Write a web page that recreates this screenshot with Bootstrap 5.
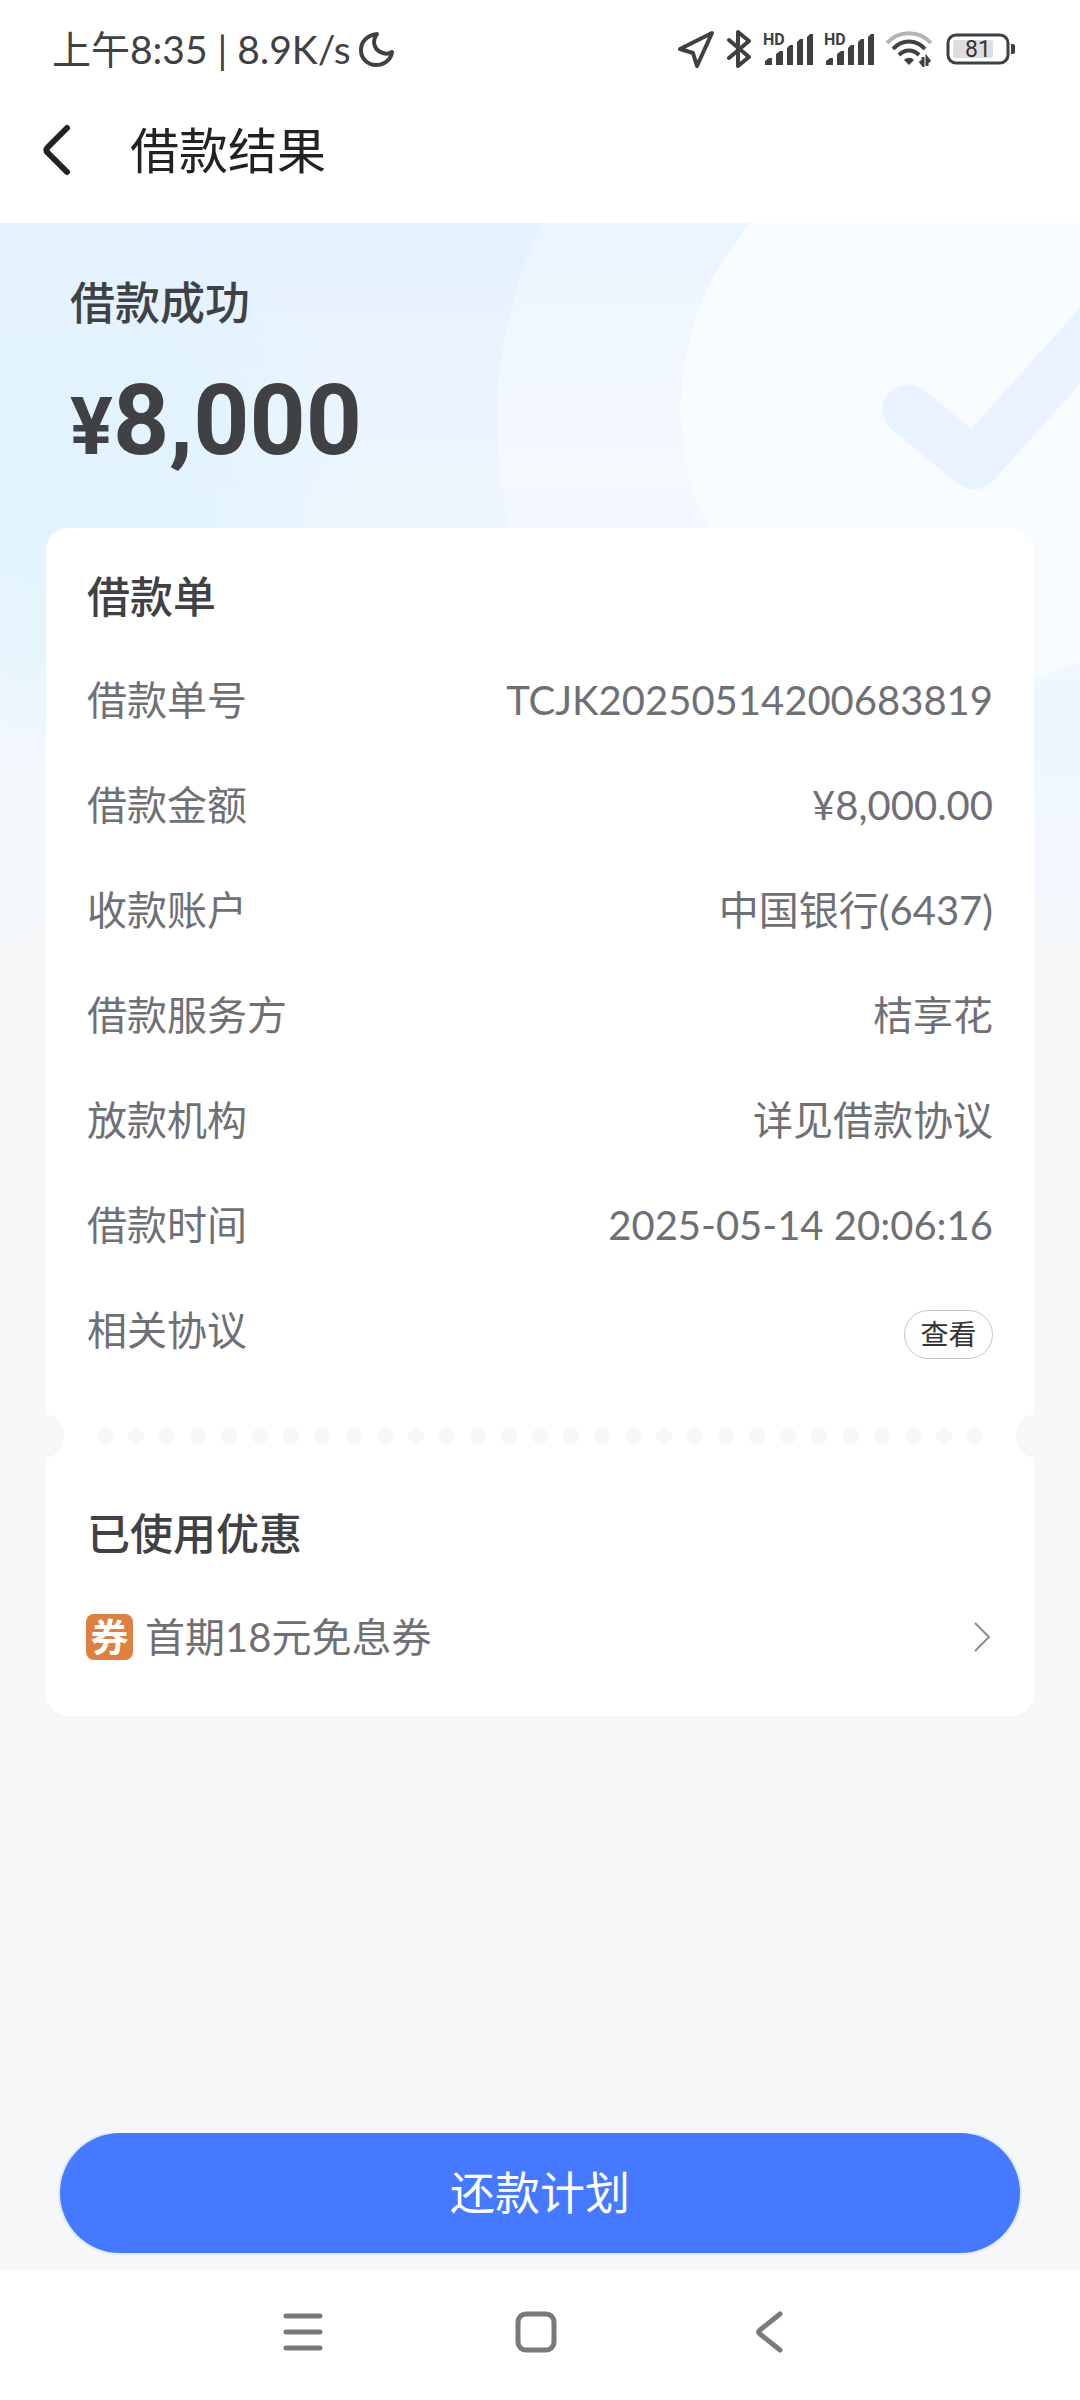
<!DOCTYPE html>
<html lang="zh-CN">
<head>
<meta charset="utf-8">
<meta name="viewport" content="width=device-width, initial-scale=1">
<title>借款结果</title>
<link href="https://cdn.jsdelivr.net/npm/bootstrap@5.3.0/dist/css/bootstrap.min.css" rel="stylesheet">
<style>
  :root { --ink: #404145; --muted: #6f7076; --page: #f5f7f9; --line: 60px; }
  body { font-family: Lato, "Noto Sans CJK SC", sans-serif; background: #fff; color: var(--ink); }
  svg { display: block; flex: none; }
  .status-bar { height: 98px; padding: 0 64px 0 52px; font-size: 39px; line-height: 48px; }
  .status-icons { gap: 11px; }
  .app-bar { height: 125px; padding: 0 40px 22px; gap: 58px; color: #222; }
  .app-title { font-size: 49px; line-height: 60px; font-weight: 400; }
  .result-page { background: linear-gradient(#e5f1fe 0, #eef6ff 280px, #f3f8fe 500px, var(--page) 720px); padding: 0 46px; }
  .backdrop { top: 0; right: 0; }
  .glow { top: 0; left: 0; width: 520px; height: 640px; background: radial-gradient(circle at 80px 270px, #dff3fdcc 0, #dff3fd99 160px, #dff3fd00 280px); }
  .result-head { padding: 50px 24px 47px; }
  .result-state { font-size: 45px; line-height: var(--line); font-weight: 500; }
  .amount { font-family: Roboto, sans-serif; font-weight: 700; font-size: 98px; line-height: 120px; padding-top: 28px; }
  .amount span { font-size: 80px; line-height: 80px; }
  .sheet { border-radius: 22px; padding: 39px 41px 26px; }
  .sheet-title { font-size: 43px; line-height: var(--line); font-weight: 500; }
  .fact { height: 105px; font-size: 40px; line-height: var(--line); color: var(--muted); }
  .facts { padding: 20px 0 31px; }
  .btn-view { --bs-btn-color: #333; --bs-btn-border-color: #c4c4c6; width: 89px; height: 49px; padding: 0; border-radius: 25px; font-size: 28px; line-height: 45px; margin-top: 10px; }
  .tear { height: 46px; margin: 0 -41px 45px; padding: 0 51px; }
  .tear::before, .tear::after { content: ""; position: absolute; top: 0; width: 46px; height: 46px; border-radius: 50%; background: var(--page); }
  .tear::before { left: -28px; }
  .tear::after { right: -28px; }
  .tear i { width: 16px; height: 16px; border-radius: 50%; background: #f5f7f9; }
  .coupon { margin-top: 20px; height: 106px; font-size: 40px; line-height: var(--line); color: var(--muted); gap: 12px; }
  .coupon-tag { width: 47px; height: 46px; border-radius: 8px; background: #dd8042; font-size: 38px; line-height: 44px; font-weight: 700; margin-left: -1px; }
  .action-bar { padding: 0 60px 17px; background: var(--page); }
  .btn-plan { --bs-btn-color: #fff; --bs-btn-bg: #4579ff; --bs-btn-hover-color: #fff; --bs-btn-hover-bg: #3a6cf0; --bs-btn-border-width: 0; height: 120px; border-radius: 60px; font-size: 45px; line-height: var(--line); box-shadow: 0 0 0 2px #dce9ff; }
  .system-nav { height: 130px; padding: 0 278px 6px 270px; }
  .system-nav .btn { padding: 12px; border: 0; }
</style>
</head>
<body class="min-vh-100 d-flex flex-column">
<header>
  <div class="status-bar d-flex align-items-center justify-content-between">
    <div class="d-flex align-items-center gap-2">
      <span>上午8:35 | 8.9K/s</span>
      <svg width="36" height="36" viewBox="0 0 36 36" fill="none" stroke="#404040" stroke-width="4" stroke-linejoin="round"><path d="M18 3C8 4 2 11 2 19c0 9 7 15 15 15 8 0 15-5 16-13-3 2-6 2-9 1-8-2-12-11-6-19z"/></svg>
    </div>
    <div class="status-icons d-flex align-items-center">
      <svg width="38" height="38" viewBox="0 0 38 38" fill="none" stroke="#404040" stroke-width="4" stroke-linejoin="round"><path d="M35 3 3 19l13 4 4 13z"/></svg>
      <svg width="26" height="38" viewBox="0 0 26 38" fill="none" stroke="#404040" stroke-width="4" stroke-linejoin="round" stroke-linecap="round"><path d="M3 10l20 17-11 9V2l11 9L3 28"/></svg>
      <svg width="50" height="38" viewBox="0 0 50 38" fill="#404040"><text x="0" y="15" font-size="16" font-weight="700" font-family="Roboto, sans-serif">HD</text><path d="M2 35v-4l4-3h3v7zM13 35V24l4-3h3v14zM24 35V18l3-3h3v20zM34 35V12l3-3h3v26zM44 35V7l3-3h3v31z"/></svg>
      <svg width="50" height="38" viewBox="0 0 50 38" fill="#404040"><text x="0" y="15" font-size="16" font-weight="700" font-family="Roboto, sans-serif">HD</text><path d="M2 35v-4l4-3h3v7zM13 35V24l4-3h3v14zM24 35V18l3-3h3v20zM34 35V12l3-3h3v26zM44 35V7l3-3h3v31z"/></svg>
      <svg width="50" height="36" viewBox="0 0 50 36" fill="none" stroke="#404040" stroke-width="4"><path d="M2 12C14-1 34-1 46 12" stroke="#b4b4b4"/><path d="M8 18c9-10 23-10 32 0M14 24c6-6 14-6 20 0"/><path d="M24 34l-5-5c3-3 7-3 10 0z" fill="#404040" stroke="none"/><path d="M38 26v8l-3-4M42 35v-8l3 4" stroke-width="3"/></svg>
      <svg width="70" height="32" viewBox="0 0 70 32"><rect x="2" y="2" width="60" height="28" rx="8" fill="none" stroke="#404040" stroke-width="3"/><rect x="7" y="7" width="40" height="18" rx="2" fill="#dedede"/><path d="M65 11h2q2 0 2 2v6q0 2-2 2h-2z" fill="#404040"/><text x="32" y="24" font-size="23" font-family="Roboto, sans-serif" fill="#333" text-anchor="middle">81</text></svg>
    </div>
  </div>
  <div class="app-bar d-flex align-items-center">
    <button type="button" class="btn p-0 border-0" aria-label="返回"><svg width="32" height="52" viewBox="0 0 32 52" fill="none" stroke="#222" stroke-width="6" stroke-linecap="round" stroke-linejoin="round"><path d="M27 4 8 23q-3 3 0 6l19 19"/></svg></button>
    <h1 class="app-title m-0">借款结果</h1>
  </div>
</header>

<main class="result-page position-relative overflow-hidden flex-grow-1">
  <div class="glow position-absolute"></div>
  <svg class="backdrop position-absolute" width="600" height="720" viewBox="480 0 600 720">
    <defs>
      <linearGradient id="outer" x1="0" y1="0" x2="0" y2="1"><stop offset=".3" stop-color="#ebf5ff"/><stop offset=".55" stop-color="#f5f9fe"/><stop offset=".8" stop-color="#eef6ff"/><stop offset="1" stop-color="#f3f7fd"/></linearGradient>
    </defs>
    <ellipse cx="1014" cy="197" rx="517" ry="480" fill="url(#outer)"/>
    <circle cx="961" cy="185" r="280" fill="#f9fcff"/>
    <path d="M908 187l66 54L1120 78" fill="none" stroke="#e9f3ff" stroke-width="51" stroke-linecap="round" stroke-linejoin="round"/>
  </svg>

  <section class="result-head position-relative">
    <h2 class="result-state m-0">借款成功</h2>
    <div class="amount"><span>¥</span>8,000</div>
  </section>

  <section class="sheet bg-white position-relative">
    <h3 class="sheet-title m-0">借款单</h3>
    <dl class="facts m-0">
      <div class="fact d-flex align-items-center justify-content-between"><dt class="fw-normal">借款单号</dt><dd class="m-0">TCJK20250514200683819</dd></div>
      <div class="fact d-flex align-items-center justify-content-between"><dt class="fw-normal">借款金额</dt><dd class="m-0">¥8,000.00</dd></div>
      <div class="fact d-flex align-items-center justify-content-between"><dt class="fw-normal">收款账户</dt><dd class="m-0">中国银行(6437)</dd></div>
      <div class="fact d-flex align-items-center justify-content-between"><dt class="fw-normal">借款服务方</dt><dd class="m-0">桔享花</dd></div>
      <div class="fact d-flex align-items-center justify-content-between"><dt class="fw-normal">放款机构</dt><dd class="m-0">详见借款协议</dd></div>
      <div class="fact d-flex align-items-center justify-content-between"><dt class="fw-normal">借款时间</dt><dd class="m-0">2025-05-14 20:06:16</dd></div>
      <div class="fact d-flex align-items-center justify-content-between"><dt class="fw-normal">相关协议</dt><dd class="m-0 d-flex"><button type="button" class="btn btn-view">查看</button></dd></div>
    </dl>
    <div class="tear position-relative d-flex align-items-center justify-content-between" aria-hidden="true">
      <i></i><i></i><i></i><i></i><i></i><i></i><i></i><i></i><i></i><i></i><i></i><i></i><i></i><i></i><i></i><i></i><i></i><i></i><i></i><i></i><i></i><i></i><i></i><i></i><i></i><i></i><i></i><i></i><i></i>
    </div>
    <h3 class="sheet-title m-0">已使用优惠</h3>
    <a href="#coupon" class="coupon d-flex align-items-center text-decoration-none">
      <span class="coupon-tag text-white text-center">券</span>
      <span class="flex-grow-1">首期18元免息券</span>
      <svg width="20" height="32" viewBox="0 0 20 32" fill="none" stroke="#8c8c8e" stroke-width="2"><path d="M2 2l14 14L2 30"/></svg>
    </a>
  </section>
</main>

<div class="action-bar">
  <button type="button" class="btn btn-plan w-100">还款计划</button>
</div>

<nav class="system-nav d-flex align-items-center justify-content-between" aria-label="系统导航">
  <button type="button" class="btn" aria-label="最近任务"><svg width="42" height="42" viewBox="0 0 42 42" stroke="#7a7a7a" stroke-width="5" stroke-linecap="round"><path d="M4 5h34M4 21h34M4 37h34"/></svg></button>
  <button type="button" class="btn" aria-label="主屏幕"><svg width="42" height="42" viewBox="0 0 42 42" fill="none" stroke="#7a7a7a" stroke-width="5"><rect x="3" y="3" width="36" height="36" rx="8"/></svg></button>
  <button type="button" class="btn" aria-label="返回上一级"><svg width="42" height="42" viewBox="0 0 42 42" fill="none" stroke="#7a7a7a" stroke-width="5" stroke-linecap="round" stroke-linejoin="round"><path d="M32 3 12 19q-3 2 0 4l20 16"/></svg></button>
</nav>
<script src="https://cdn.jsdelivr.net/npm/bootstrap@5.3.0/dist/js/bootstrap.bundle.min.js"></script>
</body>
</html>
